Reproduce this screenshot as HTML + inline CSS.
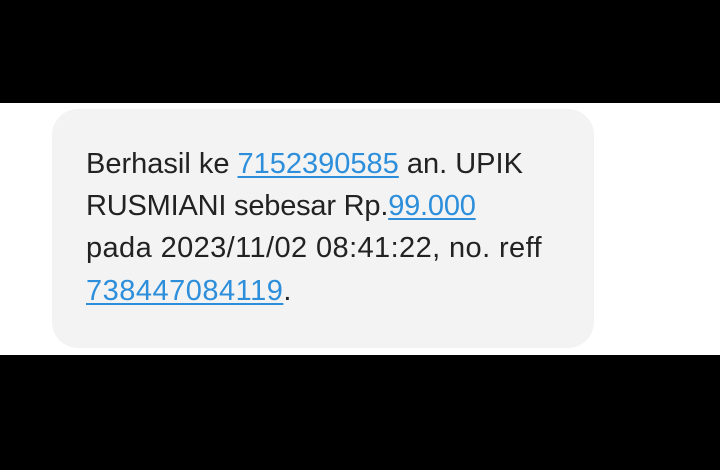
<!DOCTYPE html>
<html><head><meta charset="utf-8"><style>
html,body{margin:0;padding:0;width:720px;height:470px;background:#000;overflow:hidden}
.white{position:absolute;left:0;top:103px;width:720px;height:252px;background:#fff}
.bub{position:absolute;left:52px;top:109px;width:542px;height:239px;background:#f3f3f3;border-radius:26px}
.l{position:absolute;left:86px;font-family:"Liberation Sans",sans-serif;font-size:29px;color:#222;white-space:nowrap;line-height:30px}
a{color:#2d8fdb;text-decoration:underline;text-underline-offset:3px;text-decoration-thickness:1.5px}
</style></head><body>
<div class="white"></div>
<div class="bub"></div>
<div class="l" style="top:149px">Berhasil ke <a>7152390585</a> an. UPIK</div>
<div class="l" style="top:191px;letter-spacing:-0.2px">RUSMIANI sebesar Rp.<a>99.000</a></div>
<div class="l" style="top:233px;letter-spacing:0.4px">pada 2023/11/02 08:41:22, no. reff</div>
<div class="l" style="top:276px;letter-spacing:0.5px"><a>738447084119</a>.</div>
</body></html>
